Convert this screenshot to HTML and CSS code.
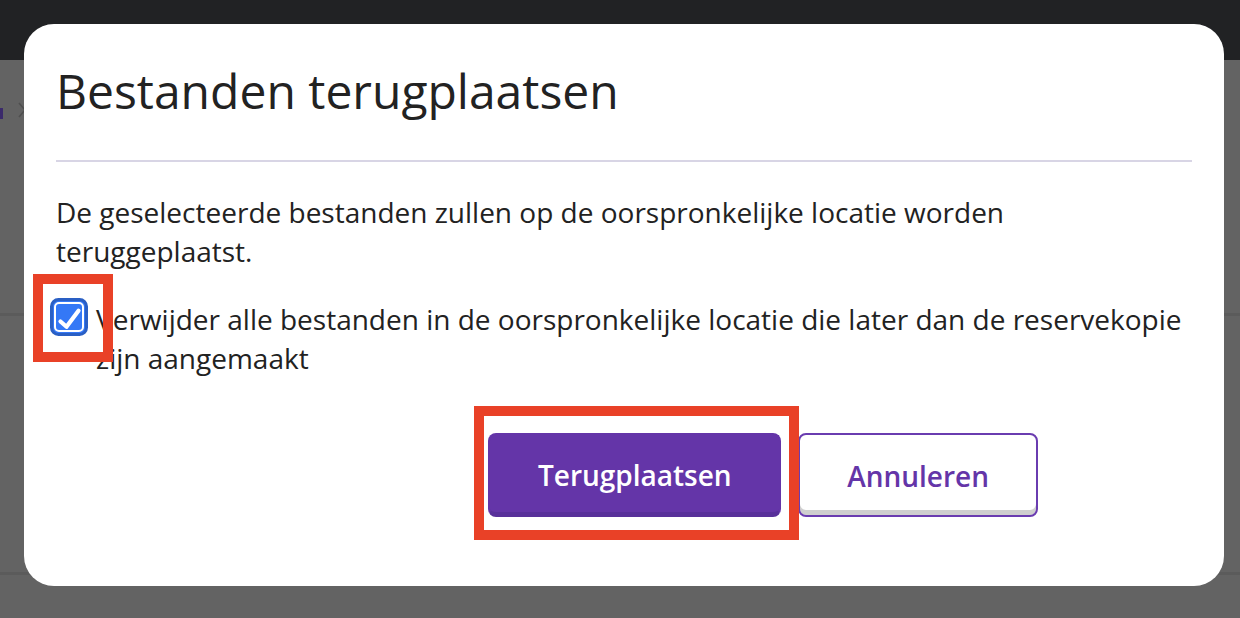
FILE: index.html
```html
<!DOCTYPE html>
<html lang="nl">
<head>
<meta charset="utf-8">
<title>Bestanden terugplaatsen</title>
<link rel="stylesheet" href="styles.css">
</head>
<body>
<div class="page">
  <div class="topbar"></div>
  <div class="crumbs">
    <span class="crumb-link"></span>
    <svg class="crumb-sep" width="8" height="16" viewBox="0 0 8 16" aria-hidden="true">
      <path d="M1 1 L7 8 L1 15" fill="none" stroke="#4f4f4f" stroke-width="1.6"/>
    </svg>
  </div>
  <div class="page-row row-a"></div>
  <div class="page-row row-b"></div>
</div>

<div class="dialog" role="dialog" aria-labelledby="dlg-title">
  <div class="dialog-header">
    <h1 id="dlg-title" class="dialog-title">Bestanden terugplaatsen</h1>
  </div>
  <p class="dialog-text">De geselecteerde bestanden zullen op de oorspronkelijke locatie worden teruggeplaatst.</p>
  <label class="check-row">
    <svg class="checkbox" width="38" height="38" viewBox="0 0 38 38" aria-hidden="true">
      <rect x="1.5" y="1.5" width="35" height="35" rx="7" fill="#3478f6" stroke="#2a5fc4" stroke-width="3"/>
      <rect x="5" y="5" width="28" height="28" rx="4" fill="#3478f6" stroke="#ffffff" stroke-width="2"/>
      <path d="M10.5 23.5 L16.5 28.8 L28.5 12.8" fill="none" stroke="#ffffff" stroke-width="4.2" stroke-linecap="round" stroke-linejoin="round"/>
    </svg>
    <span class="check-label">Verwijder alle bestanden in de oorspronkelijke locatie die later dan de reservekopie zijn aangemaakt</span>
  </label>
  <div class="dialog-actions">
    <button class="btn btn-primary" type="button">Terugplaatsen</button>
    <button class="btn btn-secondary" type="button">Annuleren</button>
  </div>
</div>

<div class="highlight hl-check"></div>
<div class="highlight hl-button"></div>
</body>
</html>
```
FILE: styles.css
```css
* { box-sizing: border-box; }

html, body {
  margin: 0;
  padding: 0;
}

body {
  width: 1240px;
  height: 618px;
  overflow: hidden;
  background: #636363;
  font-family: "Open Sans", "Noto Sans", sans-serif;
  color: #222222;
  position: relative;
}

.page {
  height: 618px;
  display: flex;
  flex-direction: column;
}

.topbar {
  height: 60px;
  background: #212224;
  flex: none;
}

.crumbs {
  height: 20px;
  margin-top: 40px;
  display: flex;
  align-items: center;
  gap: 15px;
}

.crumb-link {
  display: block;
  width: 3px;
  height: 11px;
  margin-top: 6px;
  background: #3b2a6b;
}

.crumb-sep { flex: none; }

.page-row { flex: none; }
.row-a {
  height: 3px;
  margin-top: 193px;
  background: #5b5b5b;
}
.row-b {
  height: 3px;
  margin-top: 256px;
  background: #5b5b5b;
}

.dialog {
  position: absolute;
  left: 24px;
  top: 24px;
  width: 1200px;
  height: 562px;
  background: #ffffff;
  border-radius: 30px;
  padding: 0 32px;
}

.dialog-header {
  padding: 34px 0 36px;
  border-bottom: 2px solid #d8d5e5;
}

.dialog-title {
  margin: 0;
  font-size: 48px;
  line-height: 66px;
  font-weight: 400;
  color: #222222;
}

.dialog-text {
  margin: 31px 0 0;
  font-size: 28px;
  line-height: 39px;
}

.check-row {
  display: flex;
  align-items: flex-start;
  margin-top: 29px;
  margin-left: -6px;
  gap: 8px;
}

.checkbox {
  flex: none;
  margin-top: -2px;
}

.check-label {
  font-size: 28px;
  line-height: 39px;
}

.dialog-actions {
  display: flex;
  justify-content: flex-end;
  gap: 17px;
  margin-top: 55px;
  padding-right: 154px;
}

.btn {
  font-family: "Open Sans", "Noto Sans", sans-serif;
  font-size: 28px;
  font-weight: 600;
  height: 84px;
  border-radius: 8px;
  cursor: pointer;
  line-height: 1;
  margin: 0;
}

.btn-primary {
  background: #6435a8;
  color: #ffffff;
  border: 2px solid #6435a8;
  border-bottom: 5px solid #58309a;
  padding: 3px 47.5px 0;
}

.btn-secondary {
  background: #ffffff;
  color: #6435a8;
  border: 2px solid #6a3cb0;
  box-shadow: inset 0 -5px 0 #cfcfcf;
  padding: 2px 47px 0;
}

.highlight {
  position: absolute;
  border: 10px solid #e94127;
  pointer-events: none;
}

.hl-check {
  left: 33px;
  top: 274px;
  width: 80px;
  height: 88px;
}

.hl-button {
  left: 474px;
  top: 406px;
  width: 325px;
  height: 134px;
}
```
